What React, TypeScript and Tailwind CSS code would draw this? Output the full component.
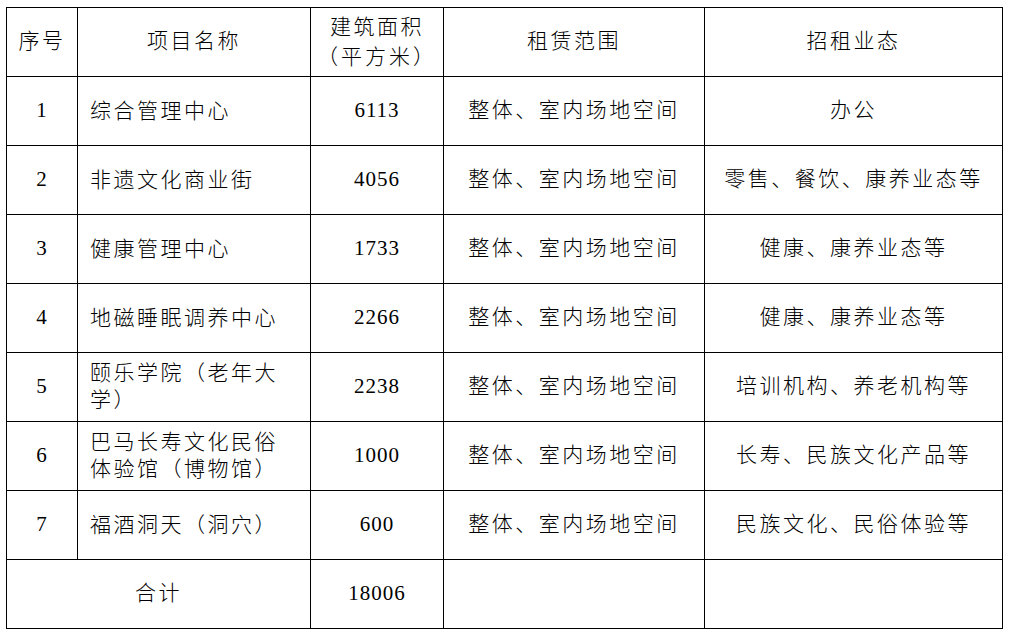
import React from "react";

type Row = {
  no: string;
  name: React.ReactNode;
  area: string;
  scope: string;
  use: string;
};

const rows: Row[] = [
  { no: "1", name: "综合管理中心", area: "6113", scope: "整体、室内场地空间", use: "办公" },
  { no: "2", name: "非遗文化商业街", area: "4056", scope: "整体、室内场地空间", use: "零售、餐饮、康养业态等" },
  { no: "3", name: "健康管理中心", area: "1733", scope: "整体、室内场地空间", use: "健康、康养业态等" },
  { no: "4", name: "地磁睡眠调养中心", area: "2266", scope: "整体、室内场地空间", use: "健康、康养业态等" },
  {
    no: "5",
    name: (
      <>
        颐乐学院（老年大
        <br />
        学）
      </>
    ),
    area: "2238",
    scope: "整体、室内场地空间",
    use: "培训机构、养老机构等",
  },
  {
    no: "6",
    name: (
      <>
        巴马长寿文化民俗
        <br />
        体验馆（博物馆）
      </>
    ),
    area: "1000",
    scope: "整体、室内场地空间",
    use: "长寿、民族文化产品等",
  },
  { no: "7", name: "福酒洞天（洞穴）", area: "600", scope: "整体、室内场地空间", use: "民族文化、民俗体验等" },
];

const cell = "border border-black align-middle";
const cjk = "tracking-[2.5px]";
const num = "tracking-[1px]";

export default function App() {
  return (
    <div
      className="min-h-[636px] w-[1011px] bg-white pl-[6px] pt-[7px] text-[21px] font-light text-black"
      style={{ fontFamily: '"Liberation Serif", "Noto Sans CJK SC", serif' }}
    >
      <table className="w-[996px] table-fixed border-collapse">
        <colgroup>
          <col className="w-[71px]" />
          <col className="w-[233px]" />
          <col className="w-[133px]" />
          <col className="w-[261px]" />
          <col className="w-[298px]" />
        </colgroup>
        <thead>
          <tr className="h-[69px]">
            <th className={`${cell} ${cjk} text-center font-light`}>序号</th>
            <th className={`${cell} ${cjk} text-center font-light`}>项目名称</th>
            <th className={`${cell} ${cjk} text-center font-light leading-[30px]`}>
              建筑面积
              <br />
              <span className="tracking-[3px]">（平方米）</span>
            </th>
            <th className={`${cell} ${cjk} text-center font-light`}>租赁范围</th>
            <th className={`${cell} ${cjk} text-center font-light`}>招租业态</th>
          </tr>
        </thead>
        <tbody>
          {rows.map((r) => (
            <tr key={r.no} className="h-[69px]">
              <td className={`${cell} ${num} text-center`}>{r.no}</td>
              <td className={`${cell} ${cjk} pl-[12px] text-left leading-[27px]`}>{r.name}</td>
              <td className={`${cell} ${num} text-center`}>{r.area}</td>
              <td className={`${cell} ${cjk} text-center`}>{r.scope}</td>
              <td className={`${cell} ${cjk} text-center`}>{r.use}</td>
            </tr>
          ))}
          <tr className="h-[69px]">
            <td colSpan={2} className={`${cell} ${cjk} text-center`}>
              合计
            </td>
            <td className={`${cell} ${num} text-center`}>18006</td>
            <td className={cell}></td>
            <td className={cell}></td>
          </tr>
        </tbody>
      </table>
    </div>
  );
}
